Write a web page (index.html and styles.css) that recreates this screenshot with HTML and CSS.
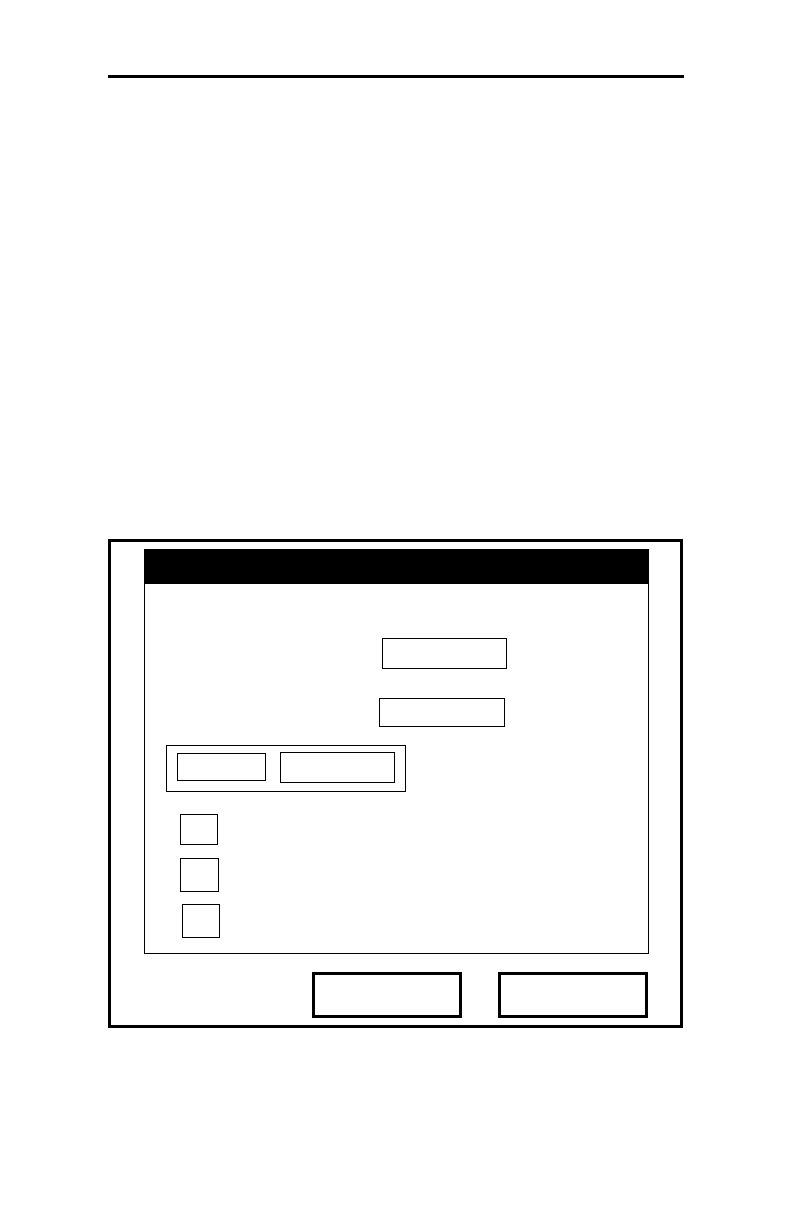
FILE: index.html
```html
<!DOCTYPE html>
<html lang="en">
<head>
<meta charset="utf-8">
<title>Dialog</title>
<link rel="stylesheet" href="styles.css">
</head>
<body>
<div class="page">
  <div class="rule"></div>
  <div class="frame">
    <div class="panel">
      <div class="panel-head"></div>
      <div class="field field-1"></div>
      <div class="field field-2"></div>
      <div class="group">
        <div class="group-a"></div>
        <div class="group-b"></div>
      </div>
      <div class="check check-1"></div>
      <div class="check check-2"></div>
      <div class="check check-3"></div>
    </div>
    <div class="buttons">
      <div class="btn"></div>
      <div class="btn"></div>
    </div>
  </div>
</div>
</body>
</html>
```

FILE: styles.css
```css
* { box-sizing: border-box; }
html, body { margin: 0; padding: 0; background: #fff; }
body { font-family: "Liberation Sans", Arial, sans-serif; }

.page {
  padding: 75px 0 0 108px;
  width: 792px;
  height: 1224px;
}

.rule {
  width: 576px;
  height: 3px;
  background: #000;
}

.frame {
  margin-top: 461px;
  width: 575px;
  height: 489px;
  border: 3px solid #000;
  display: flex;
  flex-direction: column;
}

.panel {
  margin: 7px 0 0 33px;
  width: 505px;
  height: 405px;
  border: 1px solid #000;
  border-top: none;
  display: flex;
  flex-direction: column;
  align-items: flex-start;
}

.panel-head {
  align-self: stretch;
  height: 35px;
  background: #000;
  margin-left: -1px;
}

.field { border: 1px solid #000; }
.field-1 { width: 125px; height: 31px; margin: 54px 0 0 237px; }
.field-2 { width: 126px; height: 29px; margin: 29px 0 0 234px; }

.group {
  margin: 18px 0 0 21px;
  width: 240px;
  height: 47px;
  border: 1px solid #000;
  display: flex;
  align-items: flex-start;
}
.group-a { width: 89px; height: 28px; border: 1px solid #000; margin: 7px 0 0 10px; }
.group-b { width: 115px; height: 31px; border: 1px solid #000; margin: 6px 0 0 14px; }

.check { border: 1px solid #000; }
.check-1 { width: 38px; height: 31px; margin: 22px 0 0 35px; }
.check-2 { width: 39px; height: 34px; margin: 13px 0 0 35px; }
.check-3 { width: 38px; height: 34px; margin: 12px 0 0 37px; }

.buttons {
  margin-top: 18px;
  padding-right: 32px;
  display: flex;
  justify-content: flex-end;
  gap: 36px;
}
.btn {
  width: 150px;
  height: 46px;
  border: 3px solid #000;
}
```
